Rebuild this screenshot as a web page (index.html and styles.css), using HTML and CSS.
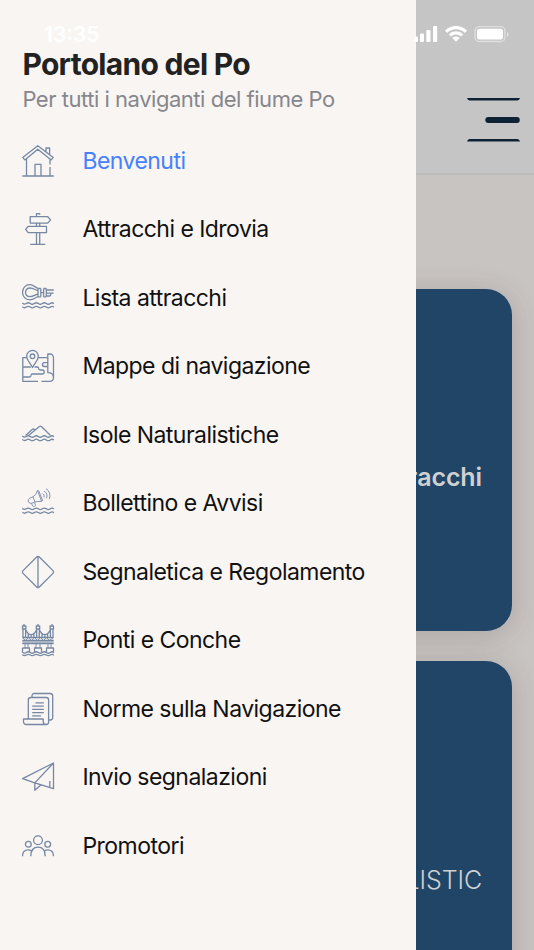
FILE: index.html
```html
<!DOCTYPE html>
<html lang="it">
<head>
  <meta charset="UTF-8">
  <meta name="viewport" content="width=device-width, initial-scale=1.0">
  <title>Portolano del Po</title>
  <link rel="stylesheet" href="styles.css">
</head>
<body>
  <div class="app">
    <header class="header">
      <svg class="burger" viewBox="0 0 53 46">
        <path d="M0 1h53q-.6 2.400-2.500 2.400h-48Q.6 3.400 0 1z"/>
        <rect x="18.300" y="20" width="34.500" height="6" rx="3"/>
        <path d="M0 44.600h53q-.6-2.600-2.500-2.600h-48Q.6 42 0 44.600z"/>
      </svg>
    </header>

    <main class="cards">
      <a class="card"><span class="card-title">Attracchi</span></a>
      <a class="card"><span class="card-title light">NATURALISTIC</span></a>
    </main>

    <!-- menu laterale -->
    <nav class="menu">
      <h1>Portolano del Po</h1>
      <p class="subtitle">Per tutti i naviganti del fiume Po</p>
      <ul>
        <li class="active">
          <svg viewBox="0 0 32 32"><path d="M.7 12.400 15.800.7l15.400 11.700-2 2.500L15.800 4.200 2.800 14.900zM4.500 14v17M28 14v5.500M28 22v9M.3 31h31.500M13 31V19.300h6V31M24 6.500V3h3.600v6.500"/></svg>
          <span>Benvenuti</span>
        </li>
        <li>
          <svg viewBox="0 0 32 32"><path d="M14.500 3.700V.6h3.200v1.200M8.200 3.700h17.500l2.900 3.200-2.900 3.200H8.200zM14.500 10.100v3.200M17.700 10.100v3.200M24.500 13.300v6.300H6.300l-2.700-3.200 2.700-3.100zM14.500 19.600v11.700M17.700 19.600v11.700M8.200 31.400h15.100"/></svg>
          <span>Attracchi e Idrovia</span>
        </li>
        <li>
          <svg viewBox="0 0 32 32"><path d="M16 6.500C12.500 4.500 10.500 2.700 7.800 2.700 3.500 2.700.5 6 .5 10.300s3 7.500 7.300 7.500c2.700 0 4.700-1.300 8.200-3.300M16 8.800c-3-1-5-2.800-8-2.800-2.600 0-4.500 1.800-4.500 4.300s1.900 4.300 4.500 4.300c3 0 5-1.800 8-2.800M16 6.500v8.300M18.800 6.500v8.300M21.600 6.500v8.300M24.300 6.500v8.300M16 6.500h2.800M21.600 6.500h2.700M16 14.800h2.800M21.600 14.800h2.700M18.800 10.600h2.800M24.300 8h7.400M24.300 11.200h7.400M24.300 14h3.200q1.300 0 1.300-2.500"/><path d="M.3 21q2 2 4 .5t4 0 4 0 4 0 4 0 4 0 4 0 3.500.2M.3 24.600q2 2 4 .5t4 0 4 0 4 0 4 0 4 0 4 0 3.500.2"/></svg>
          <span>Lista attracchi</span>
        </li>
        <li>
          <svg viewBox="0 0 32 32"><path d="M10.500 17.500C9 13.500 4.700 10.500 4.700 6.200a5.800 5.800 0 0 1 11.600 0c0 4.300-4.300 7.300-5.800 11.300zM4.800 7.700h-4v23.600H16M19.500 31.300h8c2.500 0 4-1.500 4-3.500V8c0-2.500-1.300-4-3.500-4h-2.200v18.700c3.500 0 5.700 2 5.700 5M16.200 7.700h9.600M25.800 12.700h-3.500a1.900 1.900 0 0 0 0 3.800h3.500M.8 17h8M12.500 17h2.700q1.500 0 1.500 1.500t1.500 1.500h2a2 2 0 0 1 0 4H10.500q-1.500 0-1.500 1.500T7.500 27H.8"/><circle cx="10.500" cy="6.300" r="2.300"/></svg>
          <span>Mappe di navigazione</span>
        </li>
        <li>
          <svg viewBox="0 0 32 32"><path d="m3.500 16.500 7-6.200q1-.7 2.100.4M6.500 16.500l10.600-8.800q1.300-1.100 2.600 0l8.800 8.800"/><path d="M.3 17q2 2 4 .5t4 0 4 0 4 0 4 0 4 0 4 0 3.500.2M.3 20.400q2 2 4 .5t4 0 4 0 4 0 4 0 4 0 4 0 3.500.2"/></svg>
          <span>Isole Naturalistiche</span>
        </li>
        <li>
          <svg viewBox="0 0 32 32"><path class="thin" d="M15.500 3.500q1-.4 1.500.8l3.400 8.800q.3 1.100-.8 1.200zM15.500 3.500q-1.500 5-4.500 6.300l-3.500 1.500Q5.500 12.500 6.300 14.500t3 1.900l3.200-1.200q2.800-.8 7.100-.9M11 9.800l2 5.200M9.500 16.500l1.200 2.500q.6 1 1.900.4t.8-1.700l-1-2M20.500 6.500q2.500 1.200 1.500 4M22 4q4.300 2.500 2.500 7.300M24 1.500q5.500 4 3.300 10.500"/><path d="M.3 21.300q2 2 4 .5t4 0 4 0 4 0 4 0 4 0 4 0 3.500.2M.3 25.100q2 2 4 .5t4 0 4 0 4 0 4 0 4 0 4 0 3.500.2"/></svg>
          <span>Bollettino e Avvisi</span>
        </li>
        <li>
          <svg viewBox="0 0 32 32"><path d="M14.900.8q1.100-.8 2.200 0l14.100 14.100q.8 1.100 0 2.200L17.100 31.200q-1.100.8-2.200 0L.8 17.100q-.8-1.100 0-2.200zM16 .5v31"/></svg>
          <span>Segnaletica e Regolamento</span>
        </li>
        <li>
          <svg viewBox="0 0 32 32"><path d="M2 0v2M16 0v2M30 0v2M.5 2h3.400v3H.5zM14.300 2h3.400v3h-3.400zM28.100 2h3.400v3h-3.400zM1 5v8.500M3.600 5v8.500M14.700 5v8.500M17.300 5v8.500M28.400 5v8.500M31 5v8.500M3.600 5.500q2 5.200 5.500 5.200t5.600-5.200M17.300 5.500q2 5.200 5.500 5.200t5.600-5.200M6.300 9.500v4M9.100 10.700v2.800M11.900 9.500v4M20 9.500v4M22.800 10.700v2.800M25.600 9.500v4M.3 13.500h31.400M.3 16.500h31.400M.3 19.500h31.400"/><path class="thin" d="m.5 13.500 3 3 3-3 3 3 3-3 3 3 3-3 3 3 3-3 3 3 4-3M.5 18h31M3 19.500v4.500M6 19.500v4.500M14 19.500v4.500M18 19.500v4.500M26 19.500v4.500M29 19.500v4.500"/><path d="M.5 24h7v4M12.500 28v-4h7v4M24.500 28v-4h7v4M.5 24v4M.3 28q2 2 4 .5t4 0 4 0 4 0 4 0 4 0 4 0 3.500.2M.3 30.700q2 1.500 4 .3t4 0 4 0 4 0 4 0 4 0 4 0 3.500.2"/></svg>
          <span>Ponti e Conche</span>
        </li>
        <li>
          <svg viewBox="0 0 32 32"><path d="M10 4.500V3q0-2.500 2.500-2.500h15.700q2.500 0 2.500 2.500v21.500q0 2.500-2.500 2.500h-1.700M6.300 26V7q0-2.500 2.500-2.500h15.300q2.500 0 2.500 2.500v22q0 2.500-2.300 2.500H4.500q-3 0-3-3V26h19.700v2.500q0 3 2.700 3M13.500 9.800h8.300M10.200 13.200h11.600M10.200 16.400h11.600M10.200 19.600h11.600M10.200 22.800H19"/></svg>
          <span>Norme sulla Navigazione</span>
        </li>
        <li>
          <svg viewBox="0 0 32 32"><path d="M31.500 2 .6 17.600l12.200 4.300 18.700 5.800zM31.500 2 12.800 21.900v7.400l6-5.400M27.800 20v6.300"/></svg>
          <span>Invio segnalazioni</span>
        </li>
        <li>
          <svg viewBox="0 0 32 32"><circle cx="16" cy="10.200" r="4.400"/><circle cx="6.300" cy="14.200" r="2.900"/><circle cx="25.700" cy="14.200" r="2.900"/><path d="M8.800 26.200c0-5.500 2.700-9 7.200-9s7.200 3.500 7.200 9M.5 26.200c0-4 2.300-6.400 5.700-6.400 1.500 0 2.600.4 3.500 1.200M31.500 26.200c0-4-2.300-6.400-5.700-6.400-1.500 0-2.600.4-3.500 1.200"/></svg>
          <span>Promotori</span>
        </li>
      </ul>
    </nav>

    <div class="status-bar">
      <span>13:35</span>
      <svg viewBox="0 0 98 18">
        <rect x="1" y="11.500" width="4" height="5.500" rx="1"/>
        <rect x="7" y="8.500" width="4" height="8.500" rx="1"/>
        <rect x="13.300" y="5" width="4.200" height="12" rx="1"/>
        <rect x="20" y="1" width="4.200" height="16" rx="1"/>
        <path d="M32 5.500a15.500 15.500 0 0 1 22 0l-2.200 2.400a12.300 12.300 0 0 0-17.600 0zM35.700 9.300a10.400 10.400 0 0 1 14.600 0L48 11.600a7.200 7.200 0 0 0-10 0zM39.300 13a5.400 5.400 0 0 1 7.400 0L43 16.700z"/>
        <rect class="battery" x="62" y="1.700" width="30" height="14.800" rx="4.300"/>
        <rect x="64" y="3.700" width="26" height="10.800" rx="2.500"/>
        <path class="cap" d="M94 7v5q1.700-.8 1.700-2.500T94 7z"/>
      </svg>
    </div>
  </div>
</body>
</html>
```
FILE: styles.css
```css
body {
  margin: 0;
  font-family: Inter, "Liberation Sans", sans-serif;
}

.app {
  position: relative;
  height: 950px;
  overflow: hidden;
  background-color: #c8c4c1;
}

.header {
  display: flex;
  justify-content: flex-end;
  box-sizing: border-box;
  height: 175px;
  padding: 96.5px 14px 0 0;
  background-color: #c5c5c5;
  border-bottom: 2px solid #bcbbbb;
}

.burger {
  width: 53px;
  height: 46px;
  fill: #0d2234;
}

.cards {
  display: flex;
  flex-direction: column;
  gap: 30px;
  padding: 114.4px 22.5px 0;
}

.card {
  display: flex;
  flex-direction: column;
  align-items: flex-end;
  flex-shrink: 0;
  box-sizing: border-box;
  height: 342px;
  padding: 172px 29.5px 0;
  border-radius: 26px;
  background-color: #204567;
  box-shadow: 0 4px 28px rgba(70, 55, 60, 0.22);
}

.card-title {
  color: #d0d0d0;
  font-size: 25px;
  font-weight: 600;
  line-height: 32px;
  letter-spacing: -0.1px;
}

.card-title.light {
  margin-top: 31px;
  font-weight: 300;
}

.menu {
  position: absolute;
  top: 0;
  left: 0;
  box-sizing: border-box;
  width: 416px;
  height: 100%;
  padding: 44px 22.4px 0;
  background-color: #f9f5f2;
}

.menu h1 {
  margin: 0;
  color: #222;
  font-size: 30px;
  font-weight: 700;
  line-height: 40px;
  letter-spacing: -0.7px;
}

.menu .subtitle {
  margin: 0;
  color: #86878c;
  font-size: 22px;
  line-height: 31px;
  letter-spacing: -0.47px;
  white-space: nowrap;
}

.menu ul {
  margin: 11.5px 0 0;
  padding: 0;
  list-style: none;
}

.menu li {
  display: flex;
  align-items: center;
  gap: 28px;
  height: 68.5px;
  color: #111;
  font-size: 23px;
  letter-spacing: -0.54px;
  white-space: nowrap;
}

.menu li.active {
  color: #4680ff;
}

.menu svg {
  width: 32px;
  height: 32px;
  overflow: visible;
  fill: none;
  stroke: #7588a4;
  stroke-width: 1.3;
  stroke-linejoin: round;
}

.menu svg .thin {
  stroke-width: 0.9;
}

.status-bar {
  position: absolute;
  top: 25px;
  left: 0;
  right: 0;
  display: flex;
  justify-content: space-between;
  padding: 0 23px 0 44px;
  color: #fff;
  font-size: 21px;
  font-weight: 600;
  line-height: 19px;
}

.status-bar svg {
  width: 98px;
  height: 18px;
  fill: #fff;
}

.status-bar .battery {
  fill: none;
  stroke: #fff;
  stroke-opacity: 0.45;
  stroke-width: 1.3;
}

.status-bar .cap {
  opacity: 0.5;
}
```
